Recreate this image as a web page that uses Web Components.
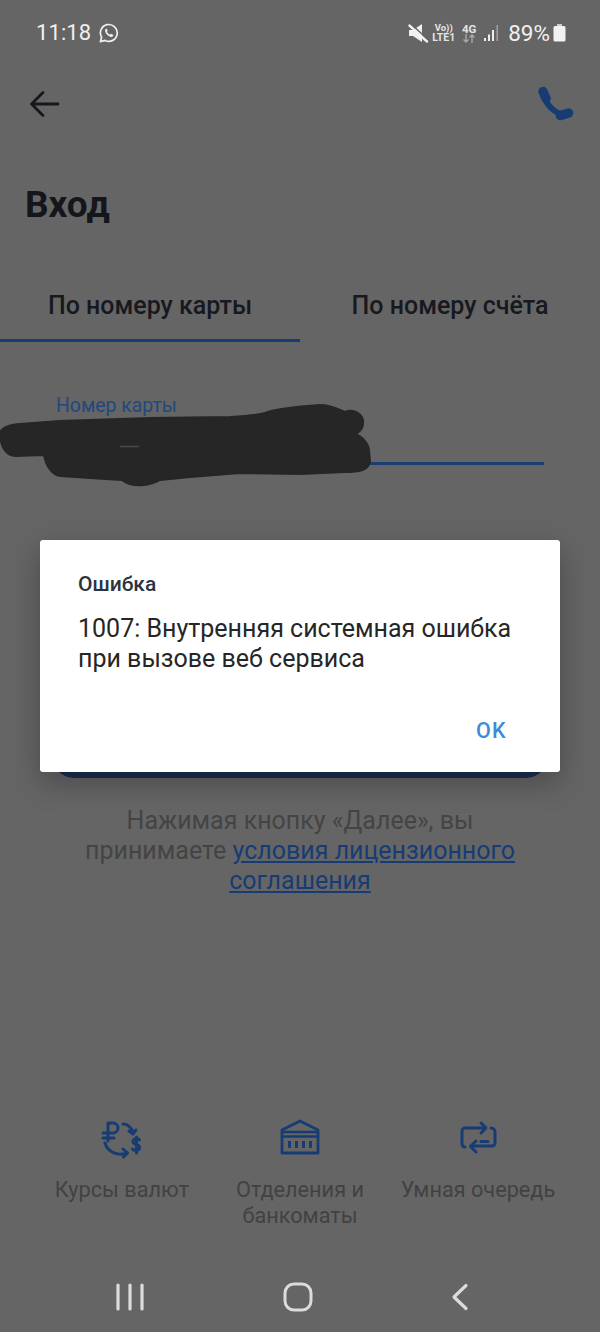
<!DOCTYPE html>
<html lang="ru"><head><meta charset="utf-8"><title>Вход</title>
<style>
html,body{margin:0;padding:0;background:#656565}
body{font-family:Roboto,"Noto Sans",sans-serif;width:600px;height:1332px;overflow:hidden}
</style></head><body>
<login-screen>
  <status-bar></status-bar>
  <app-bar></app-bar>
  <login-tabs></login-tabs>
  <card-field></card-field>
  <primary-button></primary-button>
  <terms-note></terms-note>
  <quick-links></quick-links>
  <nav-bar></nav-bar>
  <error-dialog></error-dialog>
</login-screen>
<script>
function def(name, html){
  customElements.define(name, class extends HTMLElement{
    constructor(){super();this.attachShadow({mode:'open'}).innerHTML=html;}
  });
}
def('login-screen',`<style>:host{display:flex;flex-direction:column;position:relative;width:600px;height:1332px;background:#656565;overflow:hidden}</style><slot></slot>`);

def('status-bar',`<style>
:host{display:flex;align-items:center;height:66px;padding:0 34px 0 36px;box-sizing:border-box;color:#f0f0f0;flex:none}
.time{font-size:22px;font-weight:400;letter-spacing:.1px;line-height:1}
.wa{margin-left:8px;display:block}
.sp{flex:1}
.row{display:flex;align-items:center}
.mini{display:flex;flex-direction:column;align-items:center;font-weight:700;line-height:10px;font-size:10.500px;color:#e4e4e4}
.pct{font-size:22.500px;font-weight:400;letter-spacing:0;margin-left:8px;line-height:1}
svg{display:block}
</style>
<span class="time">11:18</span>
<svg class="wa" width="20" height="20" viewBox="0 0 20 20" fill="none"><path d="M1.400 18.600l1.200-4.400A8.400 8.400 0 1 1 6 17.400z" stroke="#f0f0f0" stroke-width="1.700" stroke-linejoin="round"/><path d="M7.200 5.700c-.7.300-1.300 1.200-1.100 2.300.4 2.600 3 5.200 5.600 5.900 1.200.3 2.400-.4 2.600-1.400.1-.4 0-.6-.3-.8l-1.600-.8c-.3-.1-.5 0-.7.2l-.6.7c-1.300-.4-2.600-1.700-3.200-3l.6-.7c.2-.2.2-.4.1-.6l-.7-1.600c-.2-.3-.4-.4-.7-.2z" fill="#f0f0f0"/></svg>
<span class="sp"></span>
<div class="row">
<svg width="22" height="22" viewBox="0 0 22 22" style="margin-right:3px"><path d="M2 8h4l9-6v18l-9-6H2z" fill="#f0f0f0"/><path d="M2.500 3.500L20 19.500" stroke="#f0f0f0" stroke-width="2.500" stroke-linecap="round"/><path d="M3.500 1.500L21 17.500" stroke="#656565" stroke-width="1.500"/></svg>
<div class="mini" style="margin-right:6px"><span style="font-size:9.500px">Vo))</span><span>LTE1</span></div>
<div class="mini" style="margin-right:7px"><span style="font-size:11.500px">4G</span><svg width="16" height="9" viewBox="0 0 16 9" fill="none" stroke="#a8a8a8" stroke-width="1.400"><path d="M5 0v8M2.500 5.500L5 8l2.500-2.500M11 9V1M8.500 3.500L11 1l2.500 2.500"/></svg></div>
<svg width="16" height="17" viewBox="0 0 16 17"><rect x="0" y="13" width="2" height="3" fill="#ececec"/><rect x="4" y="9.500" width="2" height="6.500" fill="#ececec"/><rect x="8" y="5" width="2" height="11" fill="#ececec"/><rect x="12.500" y="0" width="1.500" height="16" fill="#a0a0a0"/></svg>
<span class="pct">89%</span>
<svg width="13" height="18" viewBox="0 0 13 18" style="margin-left:3px"><rect x="4" y="0" width="5" height="3" fill="#cfcfcf"/><rect x="0.500" y="2" width="12" height="15.500" rx="1.500" fill="#f2f2f2"/></svg>
</div>`);

def('app-bar',`<style>
:host{display:flex;justify-content:space-between;align-items:center;height:76px;padding:0 26px 0 28px;flex:none}
svg{display:block}
</style>
<svg width="32" height="32" viewBox="0 0 32 32" fill="none" stroke="#15171c" stroke-width="2.800" stroke-linecap="round" stroke-linejoin="round"><path d="M30 16H4M15 4.500L3.500 16 15 27.500"/></svg>
<svg width="38" height="38" viewBox="0 0 38 38" fill="none" stroke="#173c74" stroke-linecap="round"><path d="M8 8C8 18 19 30 31 30" stroke-width="6"/><path d="M7 6.500L10 13.500M24.500 30.500L32.500 28" stroke-width="9.500"/></svg>`);

customElements.define('tab-item', class extends HTMLElement{
  constructor(){super();this.attachShadow({mode:'open'}).innerHTML=`<style>
  :host{display:flex;flex:1;flex-direction:column;align-items:center;height:74px;box-sizing:border-box;padding-top:23px;font-size:25px;font-weight:500;color:#17191f;line-height:30px;border-bottom:3px solid transparent}
  :host([active]){border-bottom-color:#173c74}
  </style><slot></slot>`;}
});
def('login-tabs',`<style>
:host{display:block;flex:none}
h1{margin:0;padding:43px 0 0 25px;font-size:37px;font-weight:700;line-height:40px;color:#14161b}
.tabs{display:flex;margin-top:43px}
</style>
<h1>Вход</h1>
<div class="tabs"><tab-item active>По номеру карты</tab-item><tab-item>По номеру счёта</tab-item></div>`);

def('card-field',`<style>
:host{display:block;position:relative;height:150px;flex:none;padding:53px 56px 0 56px;box-sizing:border-box}
label{display:block;font-size:19.400px;line-height:22px;color:#23487e}
.line{height:3px;background:#1b3f75;margin-top:45px}
svg{position:absolute;left:0;top:0;overflow:visible}
</style>
<label>Номер карты</label><div class="line"></div>
<svg width="372" height="150" viewBox="0 342 372 150"><path d="M0 433C2 426 12 425 20 424L60 421L150 418L230 417C245 416 258 415 265 413C275 409 290 407 320 405C332 405 340 410 345 412C352 409 361 412 363 420C364 428 360 432 355 434C362 436 368 443 369 450L370 462C368 470 360 472 345 472L300 474L240 473L190 477L160 480C150 486 132 488 122 480L90 478L60 476C52 475 46 466 44 455L15 456C5 455 0 445 0 433Z" fill="#262626" stroke="#262626" stroke-width="2" stroke-linejoin="round"/><path d="M120 446.500H139" stroke="#4a4a4a" stroke-width="1.500"/></svg>`);

def('primary-button',`<style>
:host{display:block;flex:none;height:56px;margin:230px 52px 0;background:#1a2f50;border-radius:0 0 22px 22px}
</style>`);

def('terms-note',`<style>
:host{display:block;flex:none;margin-top:28px;text-align:center;font-size:25px;line-height:30px;color:#444;padding:0 70px}
a{color:#173c74;text-decoration:underline}
</style>
Нажимая кнопку «Далее», вы принимаете <a>условия лицензионного соглашения</a>`);

customElements.define('quick-link', class extends HTMLElement{
  constructor(){super();this.attachShadow({mode:'open'}).innerHTML=`<style>
  :host{display:flex;flex-direction:column;align-items:center;text-align:center;flex:none;width:160px;font-size:21.700px;line-height:26px;color:#424242}
  .ic{height:46px;margin-bottom:17px;display:flex;align-items:center}
  </style><div class="ic"><slot name="icon"></slot></div><slot></slot>`;}
});
def('quick-links',`<style>
:host{display:flex;justify-content:space-between;flex:none;margin-top:218px;padding:0 42px;height:118px}
svg{display:block}
</style>
<quick-link><svg slot="icon" width="44" height="44" viewBox="0 0 44 44" fill="none" stroke="#173c74" stroke-width="3" stroke-linecap="round" stroke-linejoin="round"><path d="M8 26V8h5a5 5 0 0 1 0 10H3M3 23h11"/><path d="M23 9c5 0 9 4 10 9M29 16l4 3 3-4"/><path d="M5 28c2 7 9 12 17 11 2 0 4-1 5-1M23 34l4.500 4-4 4"/><path d="M39.500 25c-1-2-6-2-6.500 1-.5 2.500 2 3 3.500 3.500s3.500 1.500 3 4c-.5 2.500-5.500 2.500-7 .5M36.500 22v16"/></svg>Курсы валют</quick-link>
<quick-link><svg slot="icon" width="40" height="36" viewBox="0 0 40 36" fill="none" stroke="#173c74" stroke-width="2.800" stroke-linejoin="round"><path d="M2 34V11L20 2l18 9v23z"/><path d="M2 13h36M2 17.500h36" stroke-width="2.500"/><path d="M9.500 22v7M16.500 22v7M23.500 22v7M30.500 22v7" stroke-width="3"/></svg>Отделения и банкоматы</quick-link>
<quick-link><svg slot="icon" width="38" height="34" viewBox="0 -2 38 34" fill="none" stroke="#173c74" stroke-width="3" stroke-linecap="round" stroke-linejoin="round"><path d="M25 6H6a3 3 0 0 0-3 3v13a3 3 0 0 0 3 3"/><path d="M22 1l5 5-5 5"/><path d="M32 6a4 4 0 0 1 4 4v11a3 3 0 0 1-3 3H12"/><path d="M17 19l-5.500 5.500L17 30"/><path d="M22 19.500h7"/></svg>Умная очередь</quick-link>`);

def('nav-bar',`<style>
:host{display:flex;flex:none;justify-content:space-between;align-items:center;height:60px;padding:0 131px 0 115px;margin-top:35px;box-sizing:border-box}
svg{display:block}
</style>
<svg width="30" height="28" viewBox="0 0 30 28" fill="none" stroke="#dcdcdc" stroke-width="3.200" stroke-linecap="round"><path d="M3 2v24M15 2v24M27 2v24"/></svg>
<svg width="30" height="30" viewBox="0 0 30 30" fill="none" stroke="#dcdcdc" stroke-width="3"><rect x="2" y="2" width="26" height="26" rx="9"/></svg>
<svg width="18" height="28" viewBox="0 0 18 28" fill="none" stroke="#dcdcdc" stroke-width="3.200" stroke-linecap="round" stroke-linejoin="round"><path d="M15 2.500L3 14l12 11.500"/></svg>`);

def('error-dialog',`<style>
:host{display:flex;flex-direction:column;position:absolute;left:40px;top:540px;width:520px;height:232px;box-sizing:border-box;padding:32px 38px 0;background:#fff;border-radius:3px;box-shadow:0 10px 30px rgba(0,0,0,.28)}
.t{font-size:21px;font-weight:500;line-height:24px;color:#2a3340}
.m{font-size:25px;line-height:30px;color:#262626;margin-top:18px}
.a{margin-top:auto;margin-bottom:29px;align-self:flex-end;padding-right:15px;font-size:21.500px;font-weight:500;letter-spacing:1.300px;line-height:24px;color:#3d8bd9}
</style>
<div class="t">Ошибка</div>
<div class="m">1007: Внутренняя системная ошибка<br>при вызове веб сервиса</div>
<div class="a">OK</div>`);
</script>
</body></html>
